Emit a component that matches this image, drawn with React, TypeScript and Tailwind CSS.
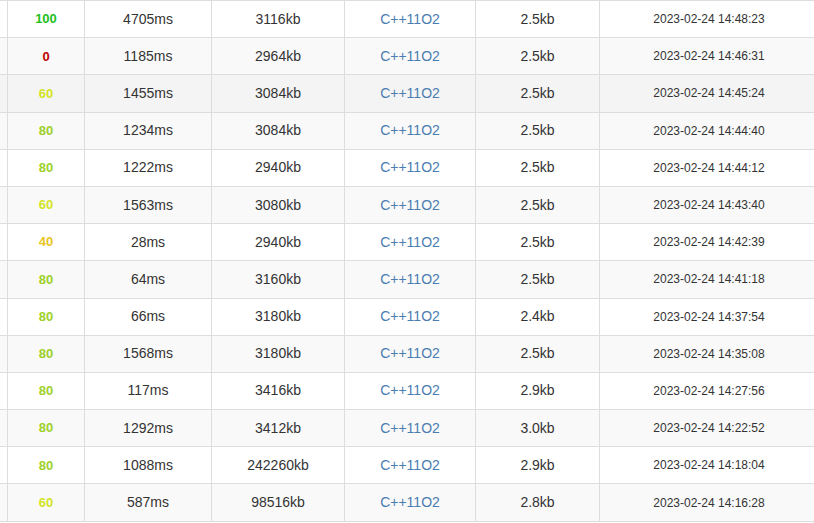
const rows = [
  { score: 100, time: '4705ms', mem: '3116kb', len: '2.5kb', at: '2023-02-24 14:48:23' },
  { score: 0, time: '1185ms', mem: '2964kb', len: '2.5kb', at: '2023-02-24 14:46:31' },
  { score: 60, time: '1455ms', mem: '3084kb', len: '2.5kb', at: '2023-02-24 14:45:24' },
  { score: 80, time: '1234ms', mem: '3084kb', len: '2.5kb', at: '2023-02-24 14:44:40' },
  { score: 80, time: '1222ms', mem: '2940kb', len: '2.5kb', at: '2023-02-24 14:44:12' },
  { score: 60, time: '1563ms', mem: '3080kb', len: '2.5kb', at: '2023-02-24 14:43:40' },
  { score: 40, time: '28ms', mem: '2940kb', len: '2.5kb', at: '2023-02-24 14:42:39' },
  { score: 80, time: '64ms', mem: '3160kb', len: '2.5kb', at: '2023-02-24 14:41:18' },
  { score: 80, time: '66ms', mem: '3180kb', len: '2.4kb', at: '2023-02-24 14:37:54' },
  { score: 80, time: '1568ms', mem: '3180kb', len: '2.5kb', at: '2023-02-24 14:35:08' },
  { score: 80, time: '117ms', mem: '3416kb', len: '2.9kb', at: '2023-02-24 14:27:56' },
  { score: 80, time: '1292ms', mem: '3412kb', len: '3.0kb', at: '2023-02-24 14:22:52' },
  { score: 80, time: '1088ms', mem: '242260kb', len: '2.9kb', at: '2023-02-24 14:18:04' },
  { score: 60, time: '587ms', mem: '98516kb', len: '2.8kb', at: '2023-02-24 14:16:28' },
];

// score colour, low to high
function scoreClass(score: number) {
  if (score === 100) return 'text-[#22c022]';
  if (score >= 80) return 'text-[#9ed02a]';
  if (score >= 60) return 'text-[#d2e426]';
  if (score >= 40) return 'text-[#e8c41c]';
  return 'text-[#c00000]';
}

function rowBg(i: number) {
  if (i === 2) return 'bg-[#f4f4f4]';
  return i % 2 === 1 ? 'bg-[#f9f9f9]' : 'bg-white';
}

export default function App() {
  return (
    <div className="w-[814px] h-[523px] overflow-hidden bg-white font-['Liberation_Sans',Arial,sans-serif] text-[#333]">
      <div className="w-[818px] border-t border-[#ddd]">
        {rows.map((r, i) => (
          <div
            key={i}
            className={`grid grid-cols-[7px_77px_127px_133px_131px_124px_219px] h-[37.2px] border-b border-[#ddd] ${rowBg(i)}`}
          >
            <div />
            <div className={`flex items-center justify-center border-l border-[#ddd] text-[13px] font-bold ${scoreClass(r.score)}`}>
              {r.score}
            </div>
            <div className="flex items-center justify-center border-l border-[#ddd] text-[14px]">{r.time}</div>
            <div className="flex items-center justify-center border-l border-[#ddd] text-[14px]">{r.mem}</div>
            <div className="flex items-center justify-center border-l border-[#ddd] text-[14px] text-[#4a7db0]">
              C++11O2
            </div>
            <div className="flex items-center justify-center border-l border-[#ddd] text-[14px]">{r.len}</div>
            <div className="flex items-center justify-center border-l border-[#ddd] text-[12px]">{r.at}</div>
          </div>
        ))}
      </div>
    </div>
  );
}
